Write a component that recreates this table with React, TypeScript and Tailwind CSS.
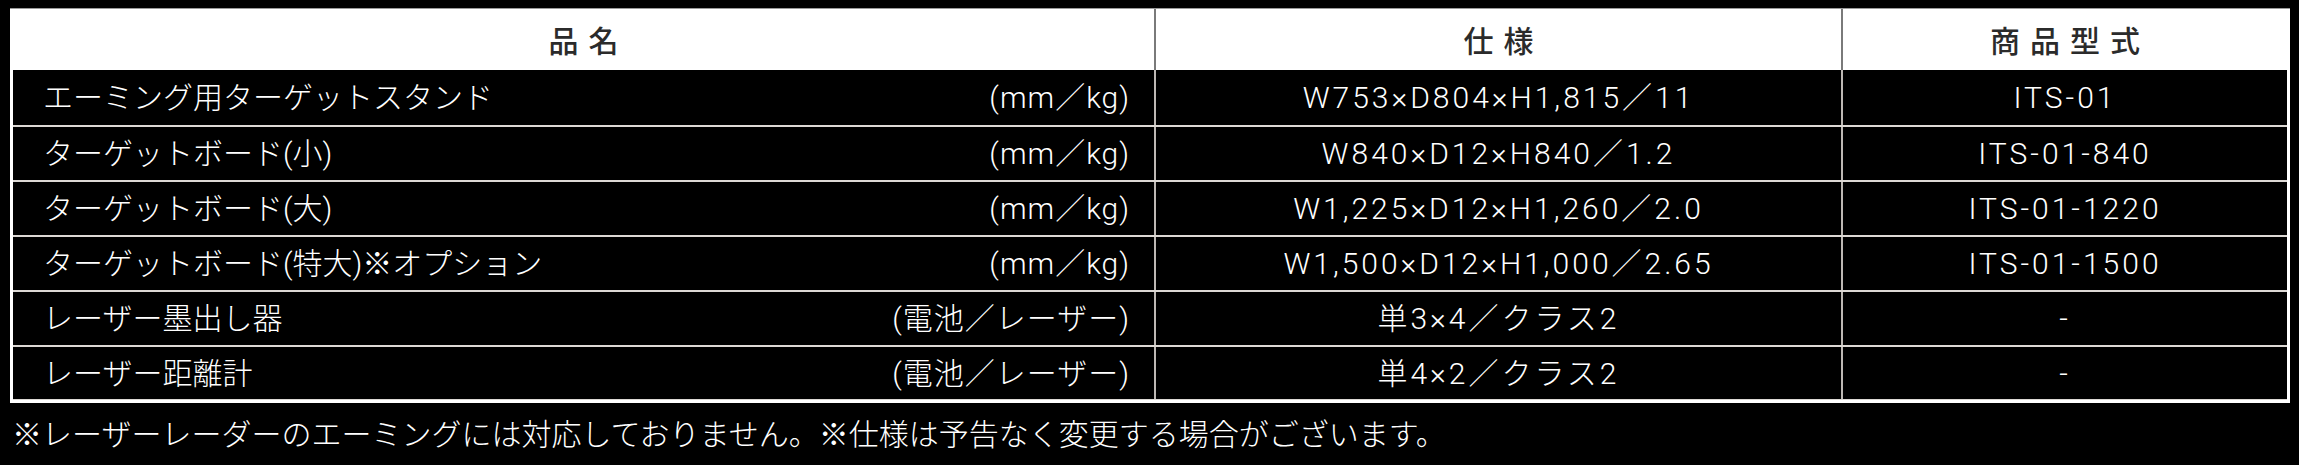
import React from 'react';

const rows = [
  { name: 'エーミング用ターゲットスタンド', unit: '(mm／kg)', spec: 'W753×D804×H1,815／11', model: 'ITS-01' },
  { name: 'ターゲットボード(小)', unit: '(mm／kg)', spec: 'W840×D12×H840／1.2', model: 'ITS-01-840' },
  { name: 'ターゲットボード(大)', unit: '(mm／kg)', spec: 'W1,225×D12×H1,260／2.0', model: 'ITS-01-1220' },
  { name: 'ターゲットボード(特大)※オプション', unit: '(mm／kg)', spec: 'W1,500×D12×H1,000／2.65', model: 'ITS-01-1500' },
  { name: 'レーザー墨出し器', unit: '(電池／レーザー)', spec: '単3×4／クラス2', model: '-' },
  { name: 'レーザー距離計', unit: '(電池／レーザー)', spec: '単4×2／クラス2', model: '-' },
];

export default function App() {
  return (
    <div className="w-[2299px] h-[465px] bg-black pt-[8px] pl-[10px] font-['Roboto','Noto_Sans_CJK_JP',sans-serif] text-white">
      <div className="w-[2280px] border-x-[3px] border-b-[3px] border-white">
        {/* header */}
        <div className="grid grid-cols-[1141px_687px_1fr] h-[62px] bg-white border-t border-[#9a9a9a] -mx-[3px] px-[3px] text-[#2b2b2b] text-[30px] font-medium font-['Noto_Sans_CJK_JP',sans-serif]">
          <div className="flex items-center justify-center tracking-[10px] pl-[10px]">品名</div>
          <div className="flex items-center justify-center tracking-[10px] pl-[10px] border-l-2 border-[#7a7a7a]">仕様</div>
          <div className="flex items-center justify-center tracking-[10px] pl-[10px] border-l-2 border-[#7a7a7a]">商品型式</div>
        </div>
        {/* body */}
        {rows.map((r, i) => (
          <div
            key={r.name}
            className={
              'grid grid-cols-[1141px_687px_1fr] h-[55px] text-[30px] font-light ' +
              (i > 0 ? 'border-t-2 border-[#dcd8d4] ' : '') +
              (i === rows.length - 1 ? 'border-b border-[#3a3a3a]' : '')
            }
          >
            <div className="flex items-center justify-between pl-[30px] pr-[24px]">
              <span>{r.name}</span>
              <span className="tracking-[1px]">{r.unit}</span>
            </div>
            <div className="flex items-center justify-center tracking-[3px] border-l-2 border-[#bdb8b4]">{r.spec}</div>
            <div className="flex items-center justify-center tracking-[3px] border-l-2 border-[#bdb8b4]">{r.model}</div>
          </div>
        ))}
      </div>
      <p className="mt-[14px] pl-[2px] text-[30px] leading-[36px] font-light whitespace-nowrap">
        ※レーザーレーダーのエーミングには対応しておりません。※仕様は予告なく変更する場合がございます。
      </p>
    </div>
  );
}
